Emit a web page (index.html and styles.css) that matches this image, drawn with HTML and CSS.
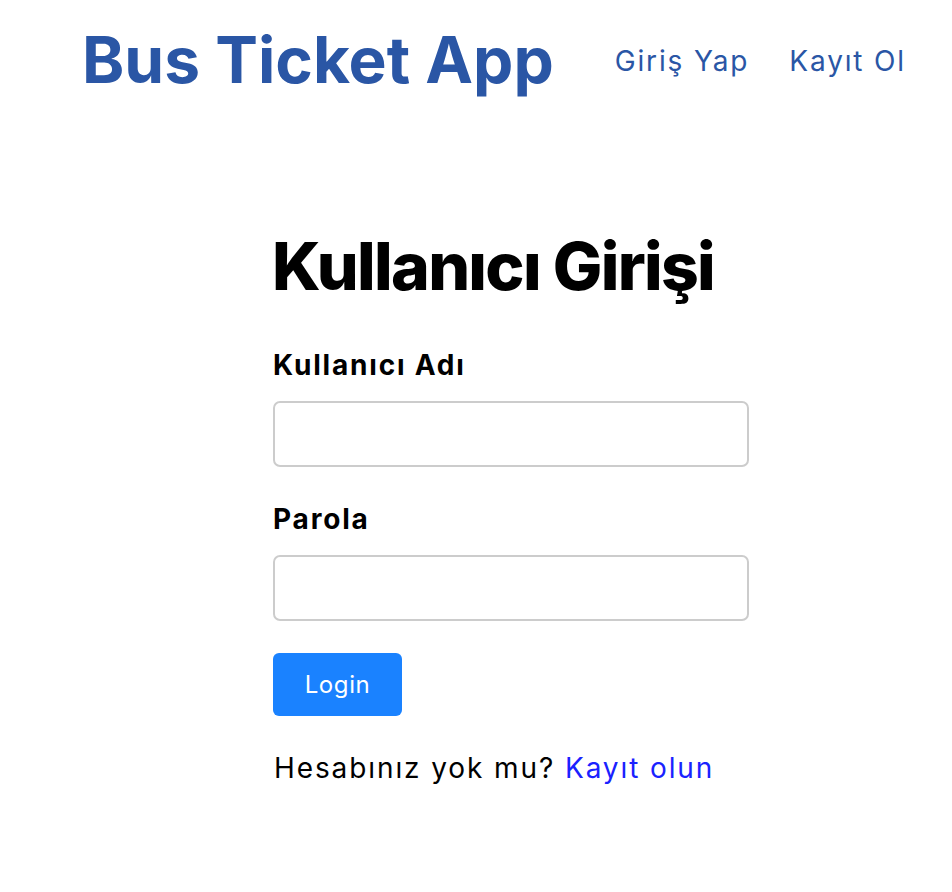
FILE: index.html
```html
<!DOCTYPE html>
<html lang="tr">
<head>
<meta charset="utf-8">
<title>Bus Ticket App</title>
<link rel="stylesheet" href="styles.css">
</head>
<body>
<header class="header">
  <h1 class="brand">Bus Ticket App</h1>
  <nav class="nav">
    <a class="nav-link" href="#">Giriş Yap</a>
    <a class="nav-link" href="#">Kayıt Ol</a>
  </nav>
</header>
<main class="main">
  <form class="login">
    <h2 class="title">Kullanıcı Girişi</h2>
    <label class="label" for="u">Kullanıcı Adı</label>
    <input class="input" id="u" type="text">
    <label class="label" for="p">Parola</label>
    <input class="input" id="p" type="password">
    <button class="btn" type="button">Login</button>
    <p class="footer-text">Hesabınız yok mu? <a class="link" href="#">Kayıt olun</a></p>
  </form>
</main>
</body>
</html>
```
FILE: styles.css
```css
* { box-sizing: border-box; }
body {
  margin: 0;
  font-family: Inter, "Noto Sans", sans-serif;
  background: #fff;
  color: #000;
}
.header {
  display: flex;
  align-items: center;
  justify-content: space-between;
  padding: 20px 46px 0 82px;
  height: 100px;
}
.brand {
  margin: 0;
  font-size: 64px;
  line-height: 64px;
  font-weight: 700;
  color: #2a56a5;
}
.nav {
  display: flex;
  gap: 40px;
  padding-top: 3px;
}
.nav-link {
  font-size: 28px;
  line-height: 35px;
  letter-spacing: 1.85px;
  color: #2a56a5;
  text-decoration: none;
}
.main {
  display: flex;
  justify-content: center;
  padding: 132px 0 0 70px;
}
.login {
  width: 476px;
  display: flex;
  flex-direction: column;
  align-items: flex-start;
}
.title {
  margin: 0 0 49px -1px;
  font-size: 66px;
  line-height: 68px;
  font-weight: 800;
  letter-spacing: -1.7px;
}
.label {
  font-size: 28px;
  line-height: 32px;
  font-weight: 700;
  letter-spacing: 1.8px;
  margin-bottom: 20px;
}
.input {
  width: 476px;
  height: 66px;
  border: 2px solid #cccccc;
  border-radius: 7px;
  margin: 0 0 36px 0;
  font-size: 24px;
  padding: 0 16px;
}
.input + .btn { margin-top: -4px; }
.btn {
  width: 129px;
  height: 63px;
  border: none;
  border-radius: 6px;
  background: #1a82ff;
  color: #fff;
  font-family: inherit;
  font-size: 24px;
  letter-spacing: 0.6px;
}
.footer-text {
  margin: 36px 0 0 1px;
  font-size: 28px;
  line-height: 33px;
  letter-spacing: 1.9px;
}
.link {
  color: #1a22ff;
  text-decoration: none;
}
```
